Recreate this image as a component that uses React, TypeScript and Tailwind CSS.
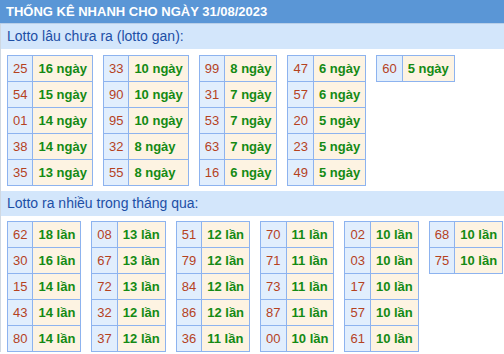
type Row = [string, string];

const gan: Row[][] = [
  [["25", "16"], ["54", "15"], ["01", "14"], ["38", "14"], ["35", "13"]],
  [["33", "10"], ["90", "10"], ["95", "10"], ["32", "8"], ["55", "8"]],
  [["99", "8"], ["31", "7"], ["53", "7"], ["63", "7"], ["16", "6"]],
  [["47", "6"], ["57", "6"], ["20", "5"], ["23", "5"], ["49", "5"]],
  [["60", "5"]],
];

const nhieu: Row[][] = [
  [["62", "18"], ["30", "16"], ["15", "14"], ["43", "14"], ["80", "14"]],
  [["08", "13"], ["67", "13"], ["72", "13"], ["32", "12"], ["37", "12"]],
  [["51", "12"], ["79", "12"], ["84", "12"], ["86", "12"], ["36", "11"]],
  [["70", "11"], ["71", "11"], ["73", "11"], ["87", "11"], ["00", "10"]],
  [["02", "10"], ["03", "10"], ["17", "10"], ["57", "10"], ["61", "10"]],
  [["68", "10"], ["75", "10"]],
];

function LotoTable({ rows, unit }: { rows: Row[]; unit: string }) {
  return (
    <table className="shrink-0 border-collapse border border-[#8db3ef] text-[13px] leading-[15px] whitespace-nowrap">
      <tbody>
        {rows.map(([num, count]) => (
          <tr key={num}>
            <td className="border border-[#8db3ef] bg-[#e1eefd] px-[5px] py-[5px] text-center text-[#b5421f]">
              {num}
            </td>
            <td className="border border-[#8db3ef] bg-[#fdf3e2] px-[5px] py-[5px] text-left font-bold text-[#148a14]">
              {count} {unit}
            </td>
          </tr>
        ))}
      </tbody>
    </table>
  );
}

function SectionTitle({ children }: { children: string }) {
  return (
    <div className="flex h-[25px] items-center bg-[#d3e6fb] pl-[6px] text-[14px] text-[#1d4fa6]">
      {children}
    </div>
  );
}

export default function App() {
  return (
    <div className="w-[504px] h-[354px] overflow-hidden bg-white font-['Liberation_Sans',Arial,sans-serif]">
      {/* Header */}
      <div className="flex h-[24px] items-center border-b border-[#b9cfe8] bg-[#5a96d6] pl-[6px] text-[13px] font-bold text-white">
        THỐNG KÊ NHANH CHO NGÀY 31/08/2023
      </div>

      <div className="border-l border-[#cfd8e2]">
        <SectionTitle>Lotto lâu chưa ra (lotto gan):</SectionTitle>
        <div className="flex items-start gap-[10px] pl-[6px] pt-[6px] pb-[5px]">
          {gan.map((rows, i) => (
            <LotoTable key={i} rows={rows} unit="ngày" />
          ))}
        </div>

        <SectionTitle>Lotto ra nhiều trong tháng qua:</SectionTitle>
        <div className="flex items-start gap-[10px] pl-[6px] pt-[5px]">
          {nhieu.map((rows, i) => (
            <LotoTable key={i} rows={rows} unit="lần" />
          ))}
        </div>
      </div>
    </div>
  );
}
